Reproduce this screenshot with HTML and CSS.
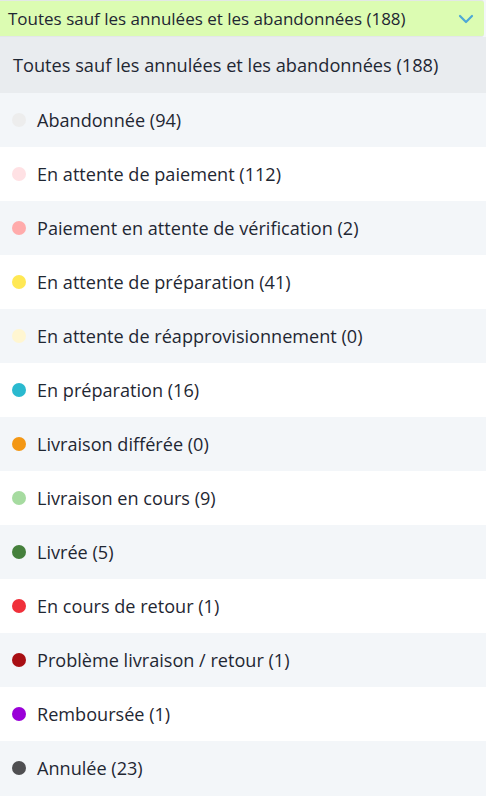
FILE: index.html
```html
<!DOCTYPE html>
<html lang="fr">
<head>
<meta charset="utf-8">
<link rel="stylesheet" href="styles.css">
</head>
<body>
<div class="select">
  <div class="toggle">
    <span class="toggle-label">Toutes sauf les annulées et les abandonnées (188)</span>
    <svg class="chevron" width="16" height="10" viewBox="0 0 16 10"><path d="M2 2 L8 8 L14 2" fill="none" stroke="#4ea8d6" stroke-width="2.2" stroke-linecap="round" stroke-linejoin="round"/></svg>
  </div>
  <ul class="menu">
    <li class="item selected"><span class="label">Toutes sauf les annulées et les abandonnées (188)</span></li>
    <li class="item alt"><span class="dot" style="background:#ededed"></span><span class="label">Abandonnée (94)</span></li>
    <li class="item"><span class="dot" style="background:#ffe1e4"></span><span class="label">En attente de paiement (112)</span></li>
    <li class="item alt"><span class="dot" style="background:#ffabab"></span><span class="label">Paiement en attente de vérification (2)</span></li>
    <li class="item"><span class="dot" style="background:#ffe854"></span><span class="label">En attente de préparation (41)</span></li>
    <li class="item alt"><span class="dot" style="background:#fff6d1"></span><span class="label">En attente de réapprovisionnement (0)</span></li>
    <li class="item"><span class="dot" style="background:#2ab9cf"></span><span class="label">En préparation (16)</span></li>
    <li class="item alt"><span class="dot" style="background:#f39715"></span><span class="label">Livraison différée (0)</span></li>
    <li class="item"><span class="dot" style="background:#a6dba0"></span><span class="label">Livraison en cours (9)</span></li>
    <li class="item alt"><span class="dot" style="background:#45803c"></span><span class="label">Livrée (5)</span></li>
    <li class="item"><span class="dot" style="background:#f0303a"></span><span class="label">En cours de retour (1)</span></li>
    <li class="item alt"><span class="dot" style="background:#a80f14"></span><span class="label">Problème livraison / retour (1)</span></li>
    <li class="item"><span class="dot" style="background:#9a00d8"></span><span class="label">Remboursée (1)</span></li>
    <li class="item alt"><span class="dot" style="background:#4f4f52"></span><span class="label">Annulée (23)</span></li>
  </ul>
</div>
</body>
</html>
```
FILE: styles.css
```css
html, body {
  margin: 0;
  padding: 0;
  background: #f3f6f9;
}
body {
  font-family: "Open Sans", "Liberation Sans", sans-serif;
  color: #1f2733;
  width: 486px;
}
.select {
  display: flex;
  flex-direction: column;
}
.toggle {
  display: flex;
  align-items: center;
  justify-content: space-between;
  height: 37px;
  margin-right: 2px;
  padding: 0 10px 0 8px;
  background: #dcfcb2;
  border-top: 1px solid #e3e8e6;
  border-bottom: 1px solid #e3e6e9;
  border-radius: 0 3px 3px 0;
  font-size: 17px;
  box-sizing: border-box;
}
.chevron {
  display: block;
}
.menu {
  list-style: none;
  margin: 0;
  padding: 0;
}
.item {
  display: flex;
  align-items: center;
  gap: 11px;
  height: 54px;
  padding-left: 12px;
  background: #ffffff;
  font-size: 18.1px;
}
.item.alt {
  background: #f3f6f9;
}
.item.selected {
  height: 56px;
  background: #e9ecef;
  padding-left: 13px;
  font-size: 18.2px;
}
.dot {
  width: 14px;
  height: 14px;
  border-radius: 50%;
  flex: none;
}
```
